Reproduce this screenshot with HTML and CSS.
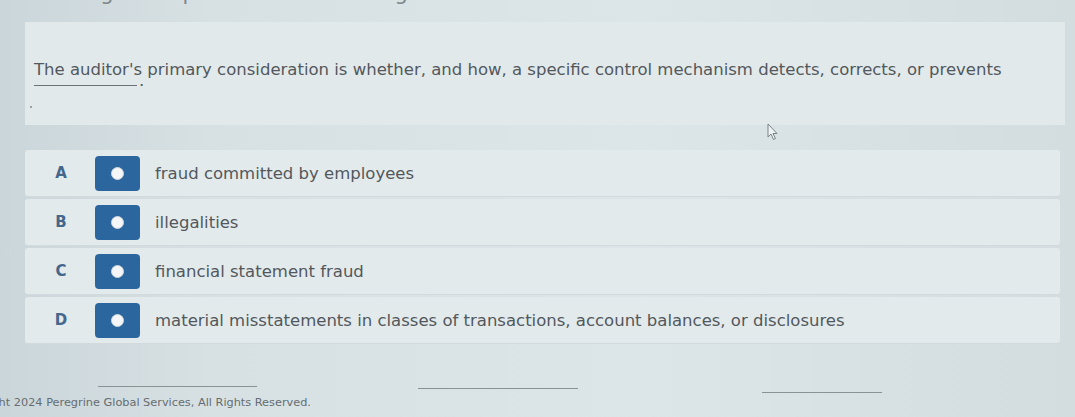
FILE: index.html
```html
<!DOCTYPE html>
<html lang="en">
<head>
<meta charset="utf-8">
<title>Question</title>
<link rel="stylesheet" href="styles.css">
</head>
<body>
<div class="page">
  <h1 class="course"><span class="course-text">Auditing - Compliance in Accounting</span></h1>
  <section class="question">
    <p class="stem">The auditor's primary consideration is whether, and how, a specific control mechanism detects, corrects, or prevents</p>
    <p class="stem-end"><span class="blank"></span>.</p>
    <span class="speck"></span>
  </section>
  <ul class="options">
    <li class="option"><span class="letter">A</span><span class="radio"><span class="dot"></span></span><span class="label">fraud committed by employees</span></li>
    <li class="option"><span class="letter">B</span><span class="radio"><span class="dot"></span></span><span class="label">illegalities</span></li>
    <li class="option"><span class="letter">C</span><span class="radio"><span class="dot"></span></span><span class="label">financial statement fraud</span></li>
    <li class="option"><span class="letter">D</span><span class="radio"><span class="dot"></span></span><span class="label">material misstatements in classes of transactions, account balances, or disclosures</span></li>
  </ul>
  <footer class="footer">
    <div class="links"><span class="link l1"></span><span class="link l2"></span><span class="link l3"></span></div>
    <p class="copy">Copyright 2024 Peregrine Global Services, All Rights Reserved.</p>
  </footer>
  <svg class="cursor" width="12" height="18" viewBox="0 0 12 18"><path d="M1 1 L1 14 L4 11 L6.5 16.5 L8.5 15.5 L6 10.5 L10 10.5 Z" fill="#eef3f4" stroke="#7b8286" stroke-width="1"/></svg>
</div>
</body>
</html>
```
FILE: styles.css
```css
* { box-sizing: border-box; }
html, body { margin: 0; padding: 0; }
body {
  width: 1075px;
  height: 417px;
  overflow: hidden;
  font-family: "DejaVu Sans", Verdana, sans-serif;
  background: linear-gradient(90deg, #cbd6da 0%, #d7e1e4 20%, #dce5e8 60%, #d3dde0 100%);
  color: #52585c;
}
.page {
  position: relative;
  height: 417px;
  padding-top: 1px;
}
.course {
  margin: -1px 0 0 26px;
  height: 22px;
  overflow: hidden;
  font-size: 21px;
  font-weight: normal;
  color: #7d8589;
  white-space: nowrap;
}
.course-text {
  display: block;
  line-height: 24px;
  margin-top: -19px;
}
.question {
  position: relative;
  margin: 0 10px 0 25px;
  height: 103px;
  background: #e2e9eb;
  padding: 40px 0 0 9px;
}
.stem {
  margin: 0;
  font-size: 16.5px;
  line-height: 16px;
  white-space: nowrap;
}
.stem-end {
  margin: 0;
  font-size: 16.5px;
  line-height: 6px;
}
.blank {
  display: inline-block;
  width: 103px;
  height: 4px;
  border-bottom: 1px solid #6d7478;
  margin-right: 2px;
}
.speck {
  position: absolute;
  left: 5px;
  top: 84px;
  width: 2px;
  height: 2px;
  background: #9aa2a6;
}
.options {
  list-style: none;
  margin: 25px 15px 0 25px;
  padding: 0;
  display: flex;
  flex-direction: column;
  gap: 3px;
}
.option {
  height: 46px;
  display: flex;
  align-items: center;
  background: #e3eaec;
  border-radius: 3px;
  box-shadow: 0 1px 0 #d2dadd;
}
.letter {
  width: 72px;
  text-align: center;
  font-size: 15px;
  font-weight: bold;
  color: #44678b;
}
.radio {
  width: 45px;
  height: 35px;
  background: #2c669e;
  border-radius: 4px;
  display: flex;
  align-items: center;
  justify-content: center;
  margin-right: 15px;
  margin-left: -2px;
}
.dot {
  width: 13px;
  height: 13px;
  border-radius: 50%;
  background: #f4f6f7;
  border: 1px solid #d0d8de;
}
.label {
  font-size: 16.5px;
  white-space: nowrap;
}
.footer {
  margin-top: 32px;
}
.links {
  display: flex;
  align-items: flex-start;
  height: 20px;
}
.link {
  display: block;
  border-bottom: 1px solid #8a9296;
}
.l1 { margin-left: 98px; width: 159px; height: 12px; }
.l2 { margin-left: 161px; width: 160px; height: 14px; }
.l3 { margin-left: 184px; width: 120px; height: 18px; }
.copy {
  margin: 1px 0 0 -45px;
  font-size: 11.3px;
  line-height: 14px;
  color: #656d71;
  white-space: nowrap;
}
.cursor {
  position: absolute;
  left: 767px;
  top: 123px;
}
```
